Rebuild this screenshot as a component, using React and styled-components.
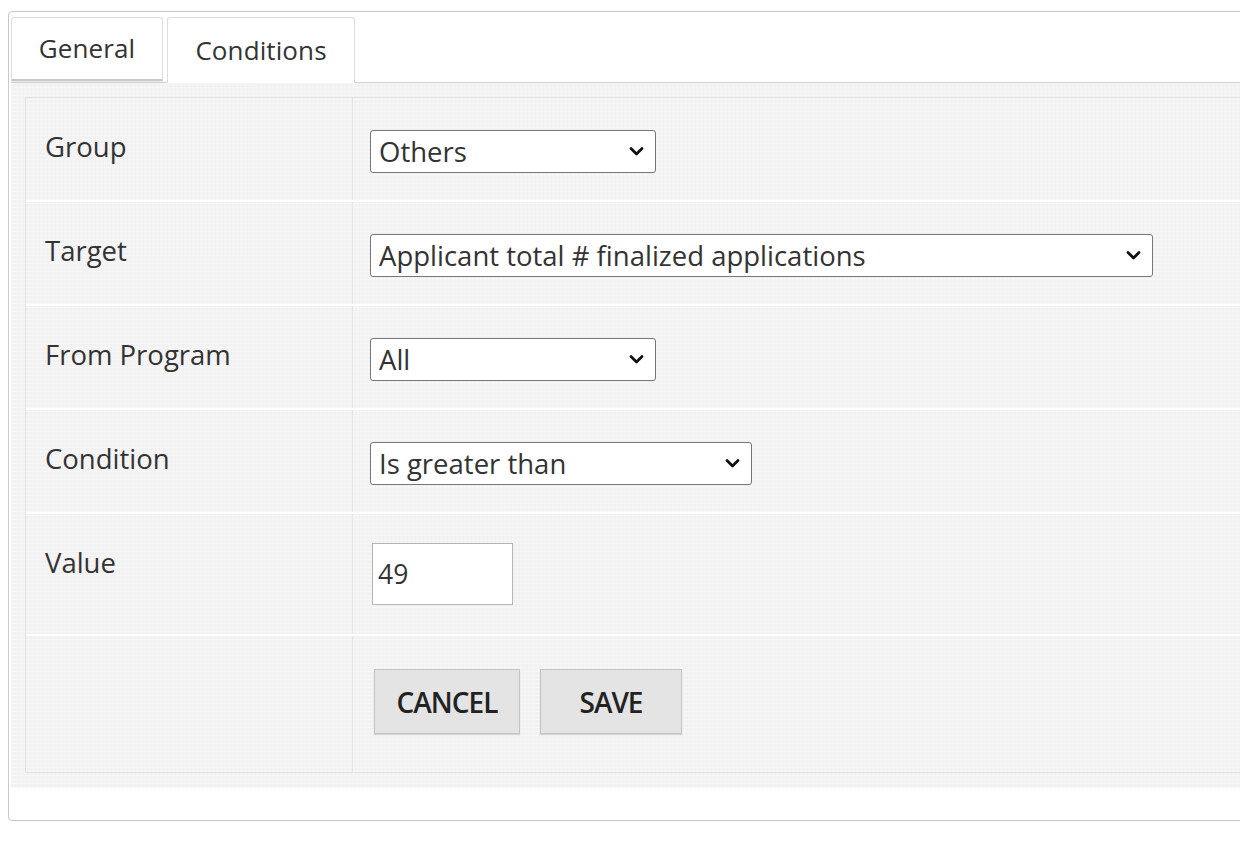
import React from 'react';
import styled, { createGlobalStyle } from 'styled-components';

const GlobalStyle = createGlobalStyle`
  html, body {
    margin: 0;
    padding: 0;
    background: #fff;
    overflow: hidden;
  }
  body {
    font-family: "Open Sans", "Liberation Sans", sans-serif;
    color: #333;
  }
`;

const Page = styled.div`
  padding: 11px 0 0 8px;
`;

const Panel = styled.div`
  width: 1320px;
  border: 1px solid #c9c9c9;
  border-radius: 4px;
  padding: 5px 2px 32px 2px;
  box-shadow: 0 1px 1px rgba(0, 0, 0, 0.05);
`;

const TabBar = styled.div`
  display: flex;
  gap: 4px;
  height: 65px;
  border-bottom: 1px solid #cfcfcf;
`;

const Tab = styled.div`
  display: flex;
  align-items: center;
  justify-content: center;
  box-sizing: border-box;
  width: ${p => p.$width}px;
  height: ${p => (p.$active ? 66 : 64)}px;
  padding-bottom: 2px;
  font-size: 26px;
  letter-spacing: 0.1px;
  color: #333;
  background: #fff;
  border: 1px solid #ddd;
  border-bottom: ${p => (p.$active ? 'none' : '2px solid #c8c8c8')};
  border-radius: 3px 3px 0 0;
  box-shadow: ${p => (p.$active ? 'none' : '0 1px 1px rgba(0,0,0,0.08)')};
  cursor: pointer;
`;

const Content = styled.div`
  background-color: #f3f3f3;
  background-image:
    repeating-linear-gradient(0deg, rgba(255,255,255,0.35) 0 1px, transparent 1px 4px),
    repeating-linear-gradient(90deg, rgba(0,0,0,0.012) 0 1px, transparent 1px 4px);
  padding: 14px 0 15px 14px;
`;

const Table = styled.div`
  border: 1px solid #e2e2e2;
  border-right: none;
`;

const Row = styled.div`
  display: grid;
  grid-template-columns: 327px 1fr;
  min-height: ${p => p.$height}px;
  border-bottom: ${p => (p.$last ? 'none' : '2px solid #fff')};
  box-sizing: border-box;
`;

const LabelCell = styled.div`
  padding: 30px 20px 0 19px;
  font-size: 27.5px;
  line-height: 38px;
  color: #333;
  border-right: 1px solid #e4e4e4;
`;

const FieldCell = styled.div`
  padding: ${p => p.$top || 32}px 0 0 17px;
`;

const SelectWrap = styled.div`
  position: relative;
  width: ${p => p.$width}px;
`;

const Select = styled.select`
  appearance: none;
  -webkit-appearance: none;
  box-sizing: border-box;
  width: 100%;
  height: 43px;
  padding: 0 40px 0 8px;
  font-family: "Open Sans", "Liberation Sans", sans-serif;
  font-size: 27.5px;
  color: #333;
  background: #fff;
  border: 1px solid #767676;
  border-radius: 3px;
  outline: none;
`;

const Chevron = styled.svg`
  position: absolute;
  right: 12px;
  top: 16px;
  width: 15px;
  height: 11px;
  pointer-events: none;
`;

const Input = styled.input`
  box-sizing: border-box;
  width: 141px;
  height: 62px;
  margin-left: 2px;
  padding: 0 5px;
  font-family: "Open Sans", "Liberation Sans", sans-serif;
  font-size: 26.5px;
  color: #333;
  background: #fff;
  border: 1px solid #b5b5b5;
  outline: none;
`;

const Actions = styled.div`
  display: flex;
  gap: 20px;
  margin-left: 4px;
`;

const Button = styled.button`
  box-sizing: border-box;
  width: ${p => p.$width}px;
  height: 65px;
  font-family: "Open Sans", "Liberation Sans", sans-serif;
  font-weight: 600;
  font-size: 28px;
  letter-spacing: -1px;
  text-transform: uppercase;
  color: #222;
  background: #e4e4e4;
  border: 1px solid #c4c4c4;
  box-shadow: 0 1px 1px rgba(0, 0, 0, 0.12);
  cursor: pointer;
`;

const Dropdown = ({ width, value, options }) => (
  <SelectWrap $width={width}>
    <Select defaultValue={value}>
      {options.map(o => (
        <option key={o}>{o}</option>
      ))}
    </Select>
    <Chevron viewBox="0 0 15 11">
      <path d="M2 2.5 L7.5 8 L13 2.5" fill="none" stroke="#111" strokeWidth="2.8" strokeLinecap="round" strokeLinejoin="round" />
    </Chevron>
  </SelectWrap>
);

const rows = [
  { label: 'Group', width: 286, value: 'Others', options: ['Others', 'Applicant', 'Application'] },
  { label: 'Target', width: 783, value: 'Applicant total # finalized applications', options: ['Applicant total # finalized applications', 'Applicant total # applications'] },
  { label: 'From Program', width: 286, value: 'All', options: ['All'] },
  { label: 'Condition', width: 382, value: 'Is greater than', options: ['Is greater than', 'Is less than', 'Is equal to'] },
];

export default function App() {
  return (
    <Page>
      <GlobalStyle />
      <Panel>
        <TabBar>
          <Tab $width={152}>General</Tab>
          <Tab $width={188} $active>Conditions</Tab>
        </TabBar>
        <Content>
          <Table>
            {rows.map(r => (
              <Row key={r.label} $height={104}>
                <LabelCell>{r.label}</LabelCell>
                <FieldCell>
                  <Dropdown width={r.width} value={r.value} options={r.options} />
                </FieldCell>
              </Row>
            ))}
            <Row $height={122}>
              <LabelCell>Value</LabelCell>
              <FieldCell $top={29}>
                <Input defaultValue="49" />
              </FieldCell>
            </Row>
            <Row $height={136} $last>
              <LabelCell />
              <FieldCell $top={33}>
                <Actions>
                  <Button $width={146}>Cancel</Button>
                  <Button $width={142}>Save</Button>
                </Actions>
              </FieldCell>
            </Row>
          </Table>
        </Content>
      </Panel>
    </Page>
  );
}
